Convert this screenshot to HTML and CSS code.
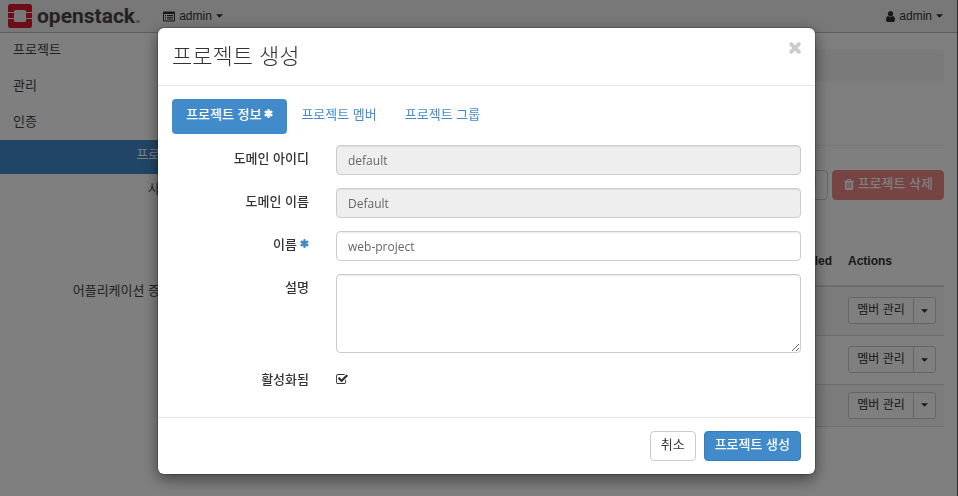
FILE: index.html
```html
<!DOCTYPE html>
<html lang="ko">
<head>
<meta charset="utf-8">
<title>프로젝트 생성</title>
<link rel="stylesheet" href="styles.css">
</head>
<body>
<svg class="sprite" aria-hidden="true">
  <symbol id="asterisk" viewBox="0 0 16 16"><path d="M8 2.200v11.600M3 5.100l10 5.800M13 5.100L3 10.900" stroke="currentColor" stroke-width="4.400" stroke-linecap="round"/></symbol>
  <symbol id="caret" viewBox="0 0 8 4"><path d="M0 0h8L4 4z"/></symbol>
</svg>

<div class="page">
  <header class="topbar">
    <a class="brand" href="#">
      <svg class="brand-mark" viewBox="0 0 24 24" aria-hidden="true">
        <path d="M2.500 0h19Q24 0 24 2.500V8h-6V7.500Q18 6 16.500 6h-9Q6 6 6 7.500V8H0V2.500Q0 0 2.500 0zM0 9h6v5H0zM18 9h6v5h-6zM0 15h6v1.500Q6 18 7.500 18h9q1.500 0 1.500-1.500V15h6v6.500q0 2.500-2.500 2.500h-19Q0 24 0 21.500z"/>
      </svg>
      <span class="brand-name">openstack<span class="brand-dot">.</span></span>
    </a>
    <button class="menu" type="button">
      <svg class="icon" viewBox="0 0 12 10" aria-hidden="true"><path fill-rule="evenodd" d="M1 0h10q1 0 1 1v8q0 1-1 1H1Q0 10 0 9V1q0-1 1-1zM1 2.500V9h10V2.500zM2 3.500h1v1H2zM4 3.500h6v1H4zM2 5.300h1v1H2zM4 5.300h6v1H4zM2 7.100h1v1H2zM4 7.100h6v1H4z"/></svg>
      admin
      <svg class="caret" aria-hidden="true"><use href="#caret"/></svg>
    </button>
    <button class="menu menu-user" type="button">
      <svg class="icon icon-user" viewBox="256 128 1280 1536" aria-hidden="true"><path d="M1536 1399q0 109-62.500 187t-150.500 78h-854q-88 0-150.500-78t-62.500-187q0-85 8.500-160.500t31.500-152 58.500-131 94-89 134.500-34.500q131 128 313 128t313-128q76 0 134.500 34.500t94 89 58.500 131 31.500 152 8.500 160.500zm-256-887q0 159-112.500 271.500t-271.500 112.500-271.500-112.500-112.500-271.500 112.500-271.500 271.500-112.500 271.500 112.500 112.500 271.500z"/></svg>
      admin
      <svg class="caret" aria-hidden="true"><use href="#caret"/></svg>
    </button>
  </header>

  <div class="columns">
    <nav class="sidebar">
      <a class="group" href="#">프로젝트</a>
      <a class="group" href="#">관리</a>
      <a class="group" href="#">인증</a>
      <a class="entry entry-active" href="#">프로젝트</a>
      <a class="entry" href="#">사용자</a>
      <a class="entry entry-last" href="#">어플리케이션 증명서</a>
    </nav>
    <main class="content">
      <div class="breadcrumb"></div>
      <div class="page-head"></div>
      <div class="toolbar">
        <button class="btn btn-create" type="button">프로젝트 생성</button>
        <button class="btn btn-danger" type="button">
          <svg class="icon" viewBox="192 128 1408 1536" aria-hidden="true"><path d="M704 1376v-704q0-14-9-23t-23-9h-64q-14 0-23 9t-9 23v704q0 14 9 23t23 9h64q14 0 23-9t9-23zm256 0v-704q0-14-9-23t-23-9h-64q-14 0-23 9t-9 23v704q0 14 9 23t23 9h64q14 0 23-9t9-23zm256 0v-704q0-14-9-23t-23-9h-64q-14 0-23 9t-9 23v704q0 14 9 23t23 9h64q14 0 23-9t9-23zm-544-992h448l-48-117q-7-9-17-11h-317q-10 2-17 11zm928 32v64q0 14-9 23t-23 9h-96v948q0 83-47 143.500t-113 60.500h-832q-66 0-113-58.500t-47-141.500v-952h-96q-14 0-23-9t-9-23v-64q0-14 9-23t23-9h309l70-167q15-37 54-63t79-26h320q40 0 79 26t54 63l70 167h309q14 0 23 9t9 23z"/></svg>
          프로젝트 삭제
        </button>
      </div>
      <table class="projects">
        <thead>
          <tr><td></td><th class="col-enabled" scope="col">Enabled</th><th class="col-actions" scope="col">Actions</th></tr>
        </thead>
        <tbody>
          <tr class="tall"><td></td><td></td><td><div class="split"><button class="split-main" type="button">멤버 관리</button><button class="split-toggle" type="button" aria-label="더 보기"><svg class="caret-small" aria-hidden="true"><use href="#caret"/></svg></button></div></td></tr>
          <tr class="tall"><td></td><td></td><td><div class="split"><button class="split-main" type="button">멤버 관리</button><button class="split-toggle" type="button" aria-label="더 보기"><svg class="caret-small" aria-hidden="true"><use href="#caret"/></svg></button></div></td></tr>
          <tr><td></td><td></td><td><div class="split"><button class="split-main" type="button">멤버 관리</button><button class="split-toggle" type="button" aria-label="더 보기"><svg class="caret-small" aria-hidden="true"><use href="#caret"/></svg></button></div></td></tr>
        </tbody>
      </table>
    </main>
  </div>
</div>

<div class="backdrop">
  <form class="modal" role="dialog" aria-labelledby="modal-title">
    <div class="modal-header">
      <h1 class="modal-title" id="modal-title">프로젝트 생성</h1>
      <button class="close" type="button" aria-label="닫기">
        <svg viewBox="302 302 1188 1188" aria-hidden="true"><path transform="translate(0 -66)" d="M1490 1322q0 40-28 68l-136 136q-28 28-68 28t-68-28l-294-294-294 294q-28 28-68 28t-68-28l-136-136q-28-28-28-68t28-68l294-294-294-294q-28-28-28-68t28-68l136-136q28-28 68-28t68 28l294 294 294-294q28-28 68-28t68 28l136 136q28 28 28 68t-28 68l-294 294 294 294q28 28 28 68z"/></svg>
      </button>
    </div>
    <div class="modal-body">
      <div class="tabs">
        <a class="tab tab-active" href="#">프로젝트 정보<svg class="asterisk" aria-hidden="true"><use href="#asterisk"/></svg></a>
        <a class="tab" href="#">프로젝트 멤버</a>
        <a class="tab" href="#">프로젝트 그룹</a>
      </div>
      <div class="fields">
        <label for="domain-id">도메인 아이디</label>
        <input class="control" id="domain-id" type="text" value="default" readonly>
        <label for="domain-name">도메인 이름</label>
        <input class="control" id="domain-name" type="text" value="Default" readonly>
        <label for="name">이름<svg class="asterisk" aria-hidden="true"><use href="#asterisk"/></svg></label>
        <input class="control" id="name" type="text" value="web-project">
        <label for="description">설명</label>
        <textarea class="control control-area" id="description"></textarea>
        <label for="enabled">활성화됨</label>
        <span class="check">
          <input id="enabled" type="checkbox" checked>
          <svg class="check-mark" viewBox="64 128 1664 1408" aria-hidden="true"><path d="M1472 930v318q0 119-84.500 203.500t-203.500 84.500h-832q-119 0-203.500-84.500t-84.500-203.500v-832q0-119 84.500-203.500t203.500-84.500h832q63 0 117 25 15 7 18 23 3 17-9 29l-49 49q-10 10-23 10-3 0-9-2-23-6-45-6h-832q-66 0-113 47t-47 113v832q0 66 47 113t113 47h832q66 0 113-47t47-113v-254q0-13 9-22l64-64q10-10 23-10 6 0 12 3 20 8 20 29zm231-489l-814 814q-24 24-57 24t-57-24l-430-430q-24-24-24-57t24-57l110-110q24-24 57-24t57 24l263 263 647-647q24-24 57-24t57 24l110 110q24 24 24 57t-24 57z"/></svg>
        </span>
      </div>
    </div>
    <div class="modal-footer">
      <button class="btn" type="button">취소</button>
      <button class="btn btn-primary" type="submit">프로젝트 생성</button>
    </div>
  </form>
</div>
</body>
</html>
```
FILE: styles.css
```css
* { box-sizing: border-box; }

body {
  margin: 0;
  overflow: hidden;
  color: #333;
  background: #fff;
  font: 13px/20px "Liberation Sans", "Noto Sans CJK KR", sans-serif;
}

a { color: inherit; text-decoration: none; }
button { font: inherit; color: inherit; margin: 0; cursor: pointer; }
svg { fill: currentColor; }
.sprite { position: absolute; width: 0; height: 0; }

/* Page */
.page {
  display: flex;
  flex-direction: column;
  min-height: 100vh;
  border-right: 1px solid #555;
}

.topbar {
  display: flex;
  align-items: center;
  height: 33px;
  padding: 0 14px 0 8px;
  background: #f0f0f0;
  border-bottom: 1px solid #bbb;
}

.brand { display: flex; align-items: center; gap: 5px; margin-right: 22px; }
.brand-mark { width: 24px; height: 24px; color: #da1a32; }
.brand-name { font: 700 21px/24px Roboto, sans-serif; color: #4a4442; }
.brand-dot { color: #999; }

.menu {
  display: flex;
  align-items: center;
  gap: 4px;
  padding: 0;
  border: 0;
  background: none;
  font-size: 12px;
}
.menu-user { margin-left: auto; }
.icon { width: 12px; height: 11px; }
.icon-user { width: 9px; }
.caret { width: 7px; height: 4px; }
.caret-small { width: 7px; height: 4px; }

.columns { display: flex; flex: 1; }

.sidebar { flex: 0 0 200px; margin-top: -1px; color: #444; }
.group { display: block; padding: 8px 13px; }
.entry { display: block; padding: 5px 16px 9px; text-align: right; }
.entry-active { color: #fff; background: #428bca; }
.entry-last { margin-top: 68px; }

.content { flex: 1; padding: 16px 13px 0 15px; }
.breadcrumb { height: 32px; border-radius: 4px; background: #f5f5f5; }
.page-head { height: 65px; border-bottom: 1px solid #eee; }
.toolbar { display: flex; justify-content: flex-end; gap: 4px; margin: 24px 0 36px; }

.btn {
  display: flex;
  align-items: center;
  gap: 3px;
  height: 30px;
  padding: 0 10px 2px;
  border: 1px solid #ccc;
  border-radius: 4px;
  background: #fff;
}
.btn-create { color: #428bca; }
.btn-danger { color: #fff; background: #e88; border-color: #e88; font-weight: 500; }
.btn-primary { color: #fff; background: #428bca; border-color: #357ebd; font-weight: 500; }

.projects { width: 100%; border-collapse: collapse; font-size: 12px; }
.projects th { padding: 8px; text-align: left; vertical-align: middle; }
.projects thead tr { height: 50px; }
.projects thead { border-bottom: 2px solid #ddd; }
.projects td { padding: 7px 8px; vertical-align: middle; }
.projects tbody tr { height: 42px; border-bottom: 1px solid #ddd; }
.projects tbody .tall { height: 49px; }
.projects tbody tr:nth-child(odd) { background: #f9f9f9; }
.col-enabled { width: 60px; }
.col-actions { width: 104px; }

.split { display: flex; height: 27px; border: 1px solid #ccc; border-radius: 3px; background: #fff; }
.split button { border: 0; background: none; padding: 0; }
.split .split-main { flex: 1; padding-bottom: 1px; }
.split .split-toggle { display: flex; align-items: center; justify-content: center; width: 22px; border-left: 1px solid #ccc; }

/* Dialog */
.backdrop {
  position: fixed;
  inset: 0;
  padding: 28px 143px 22px 158px;
  background: rgba(0, 0, 0, 0.5);
}

.modal {
  border-radius: 6px;
  background: #fff;
  box-shadow: 0 5px 15px rgba(0, 0, 0, 0.5), 0 0 0 1px rgba(0, 0, 0, 0.2);
}

.modal-header {
  display: flex;
  align-items: flex-start;
  justify-content: space-between;
  padding: 14px;
  border-bottom: 1px solid #e5e5e5;
}
.modal-title { margin: 0; font-size: 22px; line-height: 29px; font-weight: 300; }
.close { width: 12px; height: 12px; padding: 0; border: 0; background: none; color: #ccc; }
.close svg { display: block; width: 12px; height: 12px; }

.modal-body { padding: 13px 14px; }

.tabs { display: flex; margin-bottom: 11px; }
.tab { padding: 6px 14px 9px; border-radius: 4px; color: #428bca; }
.tab-active { color: #fff; background: #428bca; font-weight: 500; }
.asterisk { width: 9px; height: 9px; margin-left: 3px; vertical-align: 1px; }

.fields {
  display: grid;
  grid-template-columns: 137px 1fr;
  gap: 13px 27px;
}
.fields label { padding-top: 4px; text-align: right; font-weight: 500; }
.fields .asterisk { color: #428bca; }

.control {
  width: 100%;
  height: 30px;
  margin: 0;
  padding: 0 11px;
  border: 1px solid #ccc;
  border-radius: 4px;
  background: #fff;
  color: #666;
  box-shadow: inset 0 1px 1px rgba(0, 0, 0, 0.075);
  font: 12px/20px "Open Sans", "Noto Sans CJK KR", sans-serif;
}
.control:read-only { background: #eee; }
.control-area { display: block; height: 79px; resize: vertical; }

.check { position: relative; padding-top: 8px; height: 38px; }
.check input { display: block; width: 12px; height: 12px; margin: 0; appearance: none; }
.check-mark { position: absolute; top: 8px; left: 0; width: 12px; height: 10px; pointer-events: none; }

.modal-footer {
  display: flex;
  justify-content: flex-end;
  gap: 8px;
  padding: 13px 14px;
  border-top: 1px solid #e5e5e5;
}
```
